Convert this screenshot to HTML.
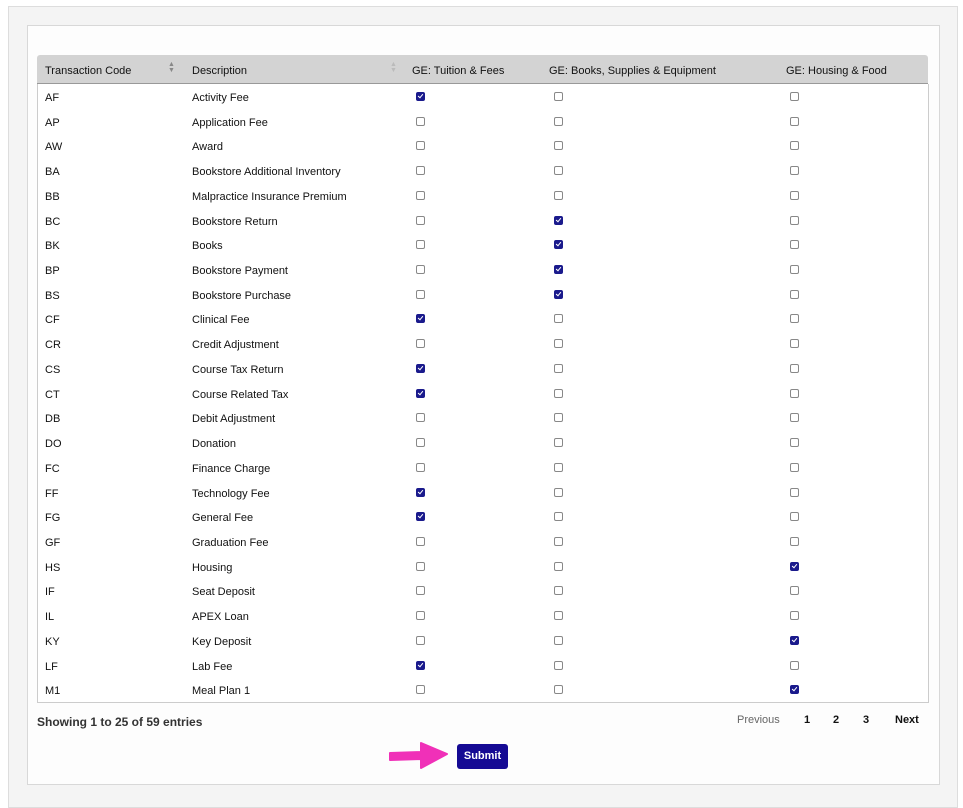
<!DOCTYPE html>
<html><head><style>
body{margin:0;width:963px;height:796px;background:#fff;font-family:"Liberation Sans",Arial,sans-serif;font-size:11px;color:#111;position:relative;overflow:hidden}
.outer{position:absolute;left:8px;top:6px;width:948px;height:800px;background:#f4f4f4;border:1px solid #ddd}
.inner{position:absolute;left:27px;top:25px;width:911px;height:758px;background:#fdfdfd;border:1px solid #d8d8d8}
.hdr{position:absolute;left:37px;top:55px;width:891px;height:28px;background:#d3d3d3;border-bottom:1px solid #999;border-radius:3px 3px 0 0}
.hdr span,.row span{position:absolute;white-space:nowrap}
.hdr span{top:10px;font-size:11px;color:#111}
.tbl{position:absolute;left:37px;top:84px;width:890px;height:618px;border:1px solid #ccc;border-top:none;background:#fff}
.row{position:absolute;left:0;width:890px;height:25px}
.row span{top:8px}
.cb{position:absolute;top:8px;width:7px;height:7px;border:1px solid #888;border-radius:2px;background:#fff}
.cb.on{background:#1a1a8c;border-color:#1a1a8c}
.cb.on:after{content:"";position:absolute;left:2px;top:0px;width:2px;height:4px;border:solid #fff;border-width:0 1.5px 1.5px 0;transform:rotate(40deg)}
.pg{position:absolute;top:714px;font-size:11px}
</style></head><body>
<div class="outer"></div>
<div class="inner"></div>
<div class="hdr">
<span style="left:8px">Transaction Code</span>
<span style="left:131px;top:7px;font-size:7px;color:#888;line-height:6px">▲<br>▼</span>
<span style="left:155px">Description</span>
<span style="left:353px;top:7px;font-size:7px;color:#bbb;line-height:6px">▲<br>▼</span>
<span style="left:375px">GE: Tuition &amp; Fees</span>
<span style="left:512px">GE: Books, Supplies &amp; Equipment</span>
<span style="left:749px">GE: Housing &amp; Food</span>
</div>
<div class="tbl" id="t"></div>
<div class="pg" style="left:37px;top:715px;font-weight:bold;font-size:12px;color:#333">Showing 1 to 25 of 59 entries</div>
<div class="pg" style="left:737px;color:#666">Previous</div>
<div class="pg" style="left:804px;font-weight:bold">1</div>
<div class="pg" style="left:833px;font-weight:bold">2</div>
<div class="pg" style="left:863px;font-weight:bold">3</div>
<div class="pg" style="left:895px;font-weight:bold">Next</div>
<div style="position:absolute;left:457px;top:744px;width:51px;height:25px;background:#150a94;border-radius:3px;color:#fff;font-size:11px;font-weight:bold;text-align:center;line-height:25px">Submit</div>
<svg style="position:absolute;left:385px;top:740px" width="72" height="36"><path d="M5 20 L36 19 L36 28 L62 14 L36 3 L36 12 L5 13 Z" fill="#f030b8" stroke="#f030b8" stroke-linejoin="round" stroke-width="2"/></svg>
<script>
var d=[["AF","Activity Fee",1],["AP","Application Fee",0],["AW","Award",0],["BA","Bookstore Additional Inventory",0],["BB","Malpractice Insurance Premium",0],["BC","Bookstore Return",2],["BK","Books",2],["BP","Bookstore Payment",2],["BS","Bookstore Purchase",2],["CF","Clinical Fee",1],["CR","Credit Adjustment",0],["CS","Course Tax Return",1],["CT","Course Related Tax",1],["DB","Debit Adjustment",0],["DO","Donation",0],["FC","Finance Charge",0],["FF","Technology Fee",1],["FG","General Fee",1],["GF","Graduation Fee",0],["HS","Housing",3],["IF","Seat Deposit",0],["IL","APEX Loan",0],["KY","Key Deposit",3],["LF","Lab Fee",1],["M1","Meal Plan 1",3]];
var h="";d.forEach(function(r,i){h+='<div class="row" style="top:'+(i*24.72)+'px"><span style="left:7px">'+r[0]+'</span><span style="left:154px">'+r[1]+'</span>';[378,516,752].forEach(function(x,j){h+='<div class="cb'+(r[2]==j+1?' on':'')+'" style="left:'+x+'px"></div>'});h+='</div>'});
document.getElementById('t').innerHTML=h;
</script>
</body></html>
